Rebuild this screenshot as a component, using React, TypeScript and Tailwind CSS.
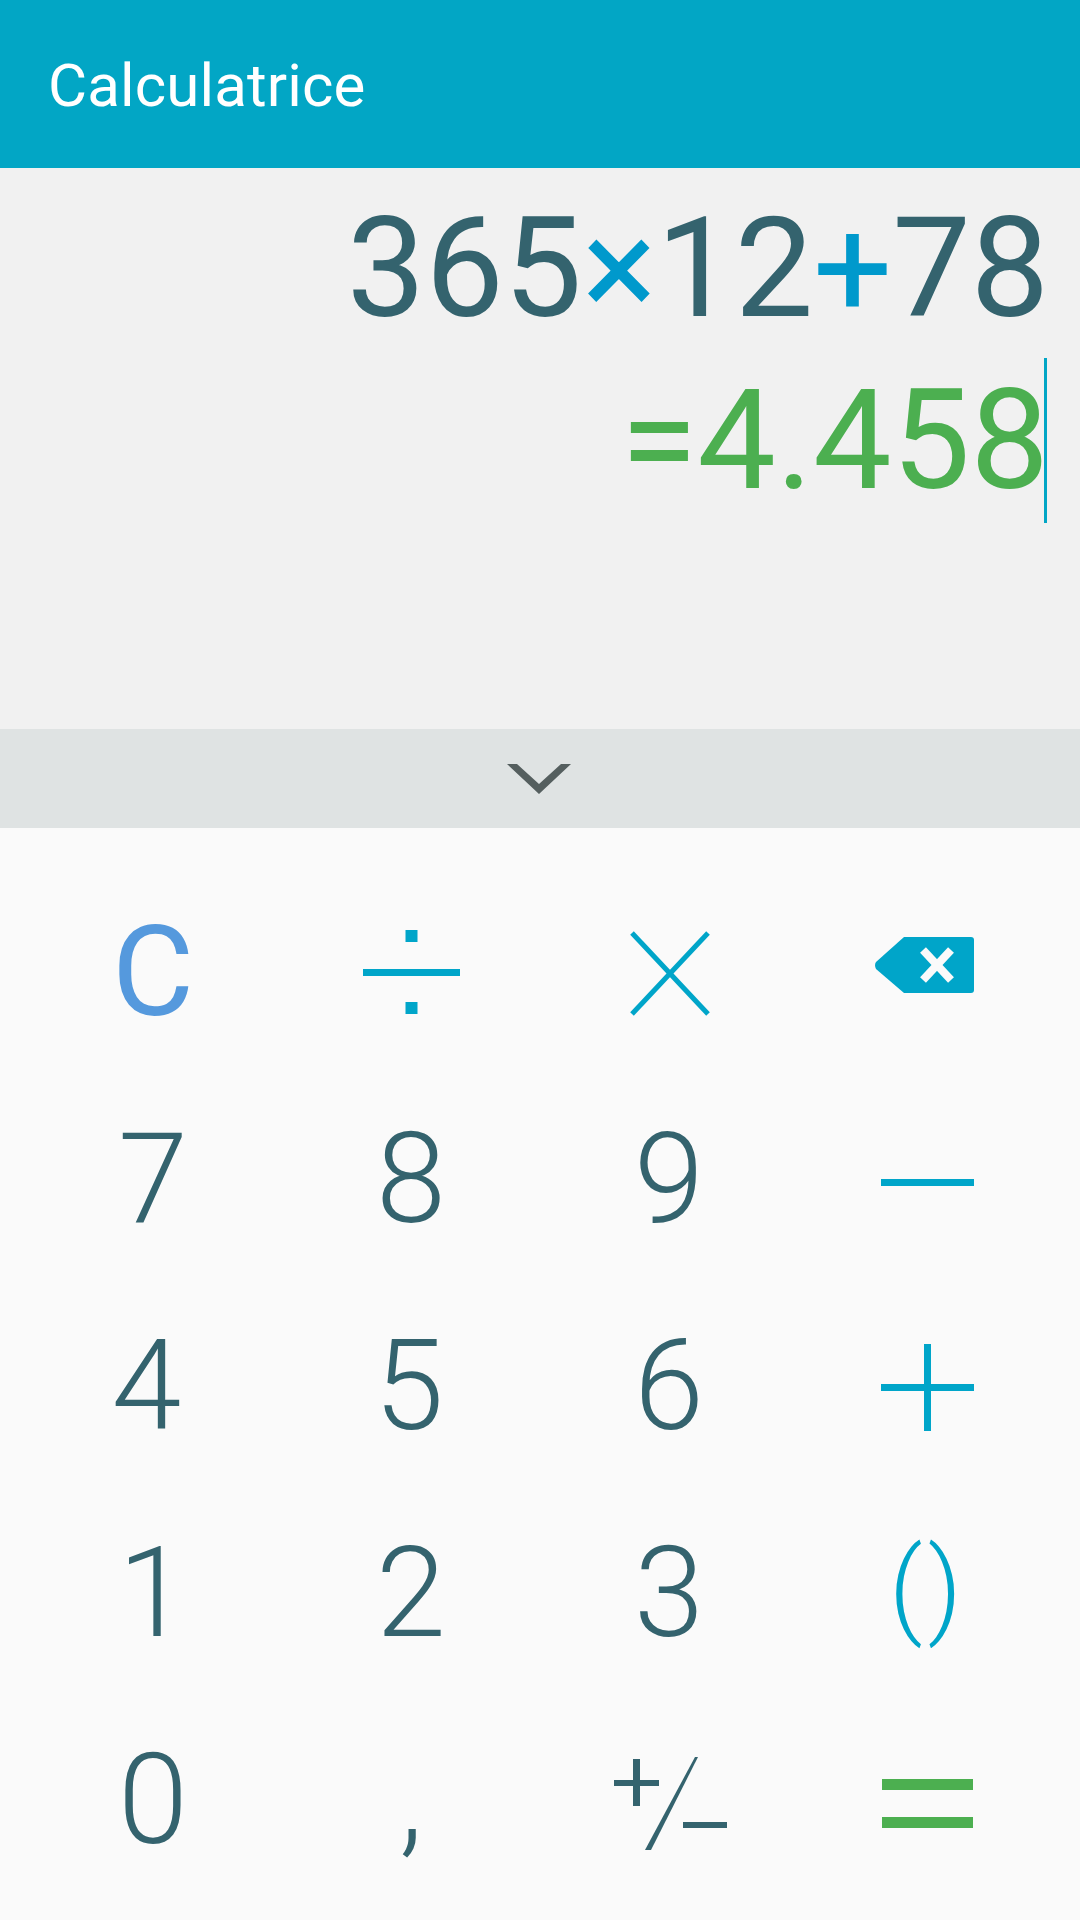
import React from "react";

const font = { fontFamily: "Roboto, sans-serif" };

function Digit({ children, className = "" }: { children: React.ReactNode; className?: string }) {
  return (
    <div className={`flex h-[207px] items-center justify-center text-[126px] leading-[207px] font-light text-[#34636e] ${className}`}>
      {children}
    </div>
  );
}

function Icon({ x, y, children }: { x: number; y: number; children: React.ReactNode }) {
  return (
    <div className="h-[207px]">
      <svg width="258" height="207" viewBox={`${x} ${y} 258 207`} className="block">
        {children}
      </svg>
    </div>
  );
}

const CY = "#00a5c9";

export default function App() {
  return (
    <div className="flex h-[1920px] w-[1080px] flex-col overflow-hidden bg-[#fafafa]" style={font}>
      <header className="flex h-[168px] shrink-0 items-center bg-[#02a6c5] pt-[3px] pl-[48px] text-[60px] leading-none font-normal tracking-[0.15px] text-white">
        Calculatrice
      </header>

      <section className="flex h-[561px] shrink-0 flex-col items-end bg-[#f1f1f1] pt-[14px] pr-[31px] text-[140px] leading-[172px]">
        <div className="tracking-[-0.3px] text-[#34636e]">
          365<span className="text-[#0099cc]">×</span>12<span className="text-[#0099cc]">+</span>78
        </div>
        <div className="relative text-[#4caf50]">
          =4.458
          <span className="absolute top-[4px] right-[2px] h-[165px] w-[3px] bg-[#02a6c5]" />
        </div>
      </section>

      <div className="flex h-[99px] shrink-0 items-center justify-center bg-[#dfe3e3]">
        <svg width="66" height="32" viewBox="507 762 66 32">
          <polygon points="507,763 517,763 539,783 561,763 571,763 539,793" fill="#555f5f" />
        </svg>
      </div>

      <main className="grid grid-cols-4 px-[24px] pt-[41px]">
        <Digit>
          <span className="font-normal text-[#5599dd]">C</span>
        </Digit>
        <Icon x={282} y={869}>
          <g fill={CY}>
            <rect x="405.5" y="930" width="12" height="12" />
            <rect x="363" y="969" width="97" height="7" />
            <rect x="405.5" y="1002" width="12" height="12" />
          </g>
        </Icon>
        <Icon x={540} y={869}>
          <g stroke={CY} strokeWidth="5" fill="none">
            <line x1="632" y1="933" x2="708" y2="1014" />
            <line x1="708" y1="933" x2="632" y2="1014" />
          </g>
        </Icon>
        <Icon x={798} y={869}>
          <path
            d="M904 937H971Q974 937 974 940V990Q974 993 971 993H904L876 969Q874 965 876 962Z"
            fill={CY}
          />
          <g stroke="#fafafa" strokeWidth="8" fill="none">
            <line x1="923" y1="950" x2="951" y2="980" />
            <line x1="951" y1="950" x2="923" y2="980" />
          </g>
        </Icon>

        <Digit>7</Digit>
        <Digit>8</Digit>
        <Digit>9</Digit>
        <Icon x={798} y={1076}>
          <rect x="881" y="1179" width="93" height="7" fill={CY} />
        </Icon>

        <Digit className="pr-[13px]">4</Digit>
        <Digit className="pr-[4px]">5</Digit>
        <Digit>6</Digit>
        <Icon x={798} y={1283}>
          <rect x="881" y="1384" width="93" height="7" fill={CY} />
          <rect x="924" y="1344" width="7" height="87" fill={CY} />
        </Icon>

        <Digit>1</Digit>
        <Digit>2</Digit>
        <Digit>3</Digit>
        <div className="flex h-[207px] items-center justify-center pb-[11px] pl-[2px] text-[105px] leading-none font-light tracking-[5px] text-[#00a5c9]">
          ()
        </div>

        <Digit>0</Digit>
        <Digit className="pb-[4px]">,</Digit>
        <Icon x={540} y={1697}>
          <g fill="#34636e">
            <rect x="614" y="1780" width="45" height="6" />
            <rect x="633" y="1759" width="7" height="47" />
            <polygon points="695,1757 698,1757 651,1850 645,1850" />
            <rect x="683" y="1822" width="44" height="6" />
          </g>
        </Icon>
        <Icon x={798} y={1697}>
          <rect x="882" y="1779" width="91" height="11" fill="#4caf50" />
          <rect x="882" y="1817" width="91" height="11" fill="#4caf50" />
        </Icon>
      </main>
    </div>
  );
}
